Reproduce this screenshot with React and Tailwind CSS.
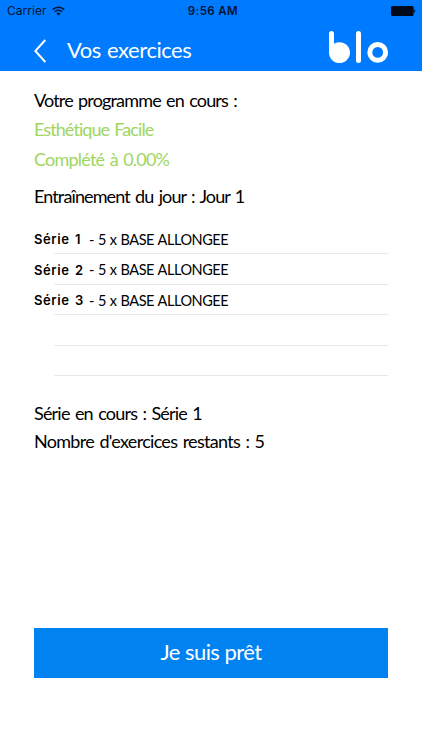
const series = [
  { name: 'Série 1', detail: '- 5 x BASE ALLONGEE' },
  { name: 'Série 2', detail: '- 5 x BASE ALLONGEE' },
  { name: 'Série 3', detail: '- 5 x BASE ALLONGEE' },
  null,
  null,
]

function WifiIcon() {
  return (
    <svg className="ml-[5px] h-[10px] w-[13px]" viewBox="0 0 13 10" fill="none" stroke="#001433">
      <path d="M0.8 3.6a8.1 8.1 0 0 1 11.4 0" strokeWidth="1.7" />
      <path d="M2.9 5.8a5.1 5.1 0 0 1 7.2 0" strokeWidth="1.6" />
      <path d="M6.5 9.6 4.5 7.5a2.9 2.9 0 0 1 4 0z" fill="#001433" stroke="none" />
    </svg>
  )
}

function BatteryIcon() {
  return (
    <svg className="h-[10px] w-[25px]" viewBox="0 0 25 10">
      <rect x="0" y="0" width="22.6" height="10" rx="1.6" fill="#000a1a" />
      <path d="M23.2 3.2c1.5.4 1.5 3.2 0 3.6z" fill="#000a1a" />
    </svg>
  )
}

function Logo() {
  return (
    <svg className="h-8 w-[60px]" viewBox="0 0 60 32" fill="none">
      <path d="M0 2.5a2.5 2.5 0 0 1 5 0v10.2a10.5 10.5 0 1 1-5 8.8z" fill="#fff" />
      <rect x="27" y="0" width="5" height="32" rx="2.5" fill="#fff" />
      <circle cx="48.7" cy="21.4" r="7.9" stroke="#fff" strokeWidth="5" />
    </svg>
  )
}

function StatusBar() {
  return (
    <div className="grid h-[22px] grid-cols-3 items-center pr-[6px] pl-[7px] font-['Inter',sans-serif] text-[12px] text-[#001433]">
      <div className="flex items-center">
        <span className="tracking-[0.05px]">Carrier</span>
        <WifiIcon />
      </div>
      <span className="pt-px pl-[3px] text-center text-[11.5px] font-semibold tracking-[0.4px] whitespace-nowrap">9:56 AM</span>
      <div className="flex justify-end">
        <BatteryIcon />
      </div>
    </div>
  )
}

function Header() {
  return (
    <header className="h-[71px] bg-[#007aff]">
      <StatusBar />
      <div className="flex h-[49px] items-start pr-[33px] pl-[34px]">
        <svg className="mt-[17px] h-6 w-3" viewBox="0 0 12 24" fill="none" stroke="#fff" strokeWidth="2">
          <path d="M11.3 1 1.3 12l10 11" />
        </svg>
        <h1 className="ml-[21px] pt-[14px] text-[22px] leading-7 tracking-[-0.45px] text-white [word-spacing:1px]">Vos exercices</h1>
        <div className="mt-[9px] ml-auto">
          <Logo />
        </div>
      </div>
    </header>
  )
}

function SeriesRow({ item }) {
  return (
    <li className="flex h-[30.6px] items-end">
      <div className="relative flex h-full w-full items-center after:absolute after:right-0 after:bottom-0 after:left-[20px] after:h-px after:bg-[#e8e8e8]">
        {item && (
          <>
            <span className="w-[55px] pt-[2px] font-['Inter',sans-serif] text-[13px] font-semibold tracking-[0.6px] whitespace-nowrap">{item.name}</span>
            <span className="pt-[2px] text-[14.5px] tracking-[-0.45px] whitespace-nowrap [word-spacing:0.7px]">{item.detail}</span>
          </>
        )}
      </div>
    </li>
  )
}

export default function App() {
  return (
    <div className="flex h-[750px] w-[422px] flex-col overflow-hidden bg-white font-['Lato',sans-serif] text-black">
      <Header />
      <main className="flex flex-1 flex-col px-[34px] pt-[15px] text-[18px] whitespace-nowrap [word-spacing:1.5px]">
        <p className="leading-[29px] tracking-[-0.84px]">Votre programme en cours :</p>
        <p className="leading-[29px] tracking-[-0.92px] text-[#9ed662]">Esthétique Facile</p>
        <p className="leading-[30px] tracking-[-0.78px] text-[#9ed662]">Complété à 0.00%</p>
        <p className="mt-[8px] leading-[29px] tracking-[-0.88px]">Entraînement du jour : Jour 1</p>
        <ul className="mt-[12.4px]">
          {series.map((item, i) => (
            <SeriesRow key={i} item={item} />
          ))}
        </ul>
        <p className="mt-[23px] leading-[28px] tracking-[-0.8px]">Série en cours : Série 1</p>
        <p className="leading-[28px] tracking-[-0.71px]">Nombre d'exercices restants : 5</p>
        <button className="mt-auto mb-[72px] h-[50.5px] shrink-0 bg-[#0082f0] pb-[3px] text-[22px] tracking-[-0.55px] text-white">Je suis prêt</button>
      </main>
    </div>
  )
}
